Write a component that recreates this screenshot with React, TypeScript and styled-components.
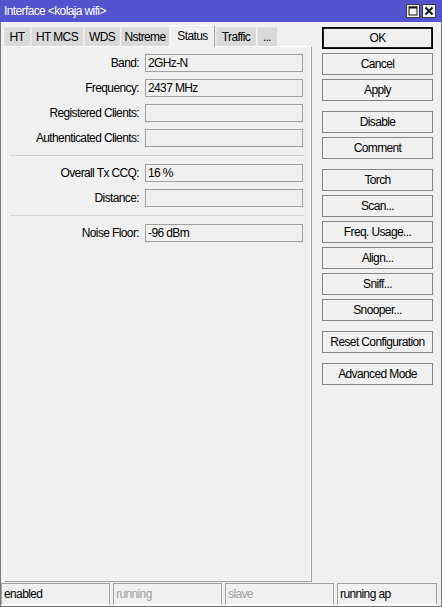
import React from "react";
import styled, { createGlobalStyle } from "styled-components";

const GlobalStyle = createGlobalStyle`
  html, body { margin: 0; padding: 0; background: #f0f0f0; }
  * { box-sizing: border-box; }
  body {
    font-family: "Liberation Sans", Arial, sans-serif;
    font-size: 12px;
    letter-spacing: -0.62px;
    color: #000;
  }
`;

const Window = styled.div`
  width: 442px;
  height: 607px;
  display: flex;
  flex-direction: column;
  background: #f0f0f0;
  overflow: hidden;
`;

const TitleBar = styled.div`
  height: 22px;
  flex: none;
  background: #5353cd;
  display: flex;
  align-items: center;
  justify-content: space-between;
  padding: 0 6px 0 4px;
  color: #fff;
`;

const TitleText = styled.span`
  line-height: 22px;
  white-space: nowrap;
`;

const TitleButtons = styled.div`
  display: flex;
  gap: 2px;
`;

const TitleButton = styled.div`
  width: 14px;
  height: 14px;
  border: 1px solid #3c3c3c;
  background: #f0f0f0;
  display: flex;
  align-items: center;
  justify-content: center;
`;

const Body = styled.div`
  flex: 1;
  display: flex;
  flex-direction: column;
  border: 1px solid #7a7a7a;
  border-top: none;
`;

const Main = styled.div`
  flex: 1;
  display: flex;
  padding: 2px 0 1px 3px;
`;

const LeftColumn = styled.div`
  width: 308px;
  display: flex;
  flex-direction: column;
`;

const Tabs = styled.div`
  height: 22px;
  display: flex;
  align-items: flex-end;
  gap: 1px;
`;

const Tab = styled.div<{ $w: number; $active?: boolean }>`
  width: ${(p) => p.$w}px;
  height: ${(p) => (p.$active ? 22 : 19)}px;
  display: flex;
  align-items: center;
  justify-content: center;
  white-space: nowrap;
  background: ${(p) => (p.$active ? "#f0f0f0" : "#d9d9d9")};
  border-top: 1px solid ${(p) => (p.$active ? "#ffffff" : "#e4e4e4")};
  border-left: 1px solid ${(p) => (p.$active ? "#ffffff" : "#e4e4e4")};
  border-right: 1px solid ${(p) => (p.$active ? "#a0a0a0" : "#d9d9d9")};
  position: relative;
  z-index: ${(p) => (p.$active ? 1 : 0)};
  margin-bottom: ${(p) => (p.$active ? -1 : 0)}px;
  padding-bottom: ${(p) => (p.$active ? 2 : 0)}px;
`;

const Panel = styled.div`
  flex: 1;
  border-top: 1px solid #ffffff;
  border-left: 1px solid #ffffff;
  border-right: 1px solid #a0a0a0;
  border-bottom: 1px solid #a0a0a0;
  box-shadow: inset -1px 0 0 #ffffff;
  padding-top: 7px;
  display: flex;
  flex-direction: column;
  gap: 7px;
`;

const Row = styled.div`
  display: grid;
  grid-template-columns: 134px 158px;
  column-gap: 6px;
  align-items: center;
`;

const Label = styled.div`
  text-align: right;
  white-space: nowrap;
`;

const Field = styled.div`
  height: 18px;
  border: 1px solid #a0a0a0;
  background: #f0f0f0;
  padding: 0 2px;
  line-height: 16px;
  white-space: nowrap;
`;

const Separator = styled.div`
  height: 1px;
  margin: 1px 7px 1px 5px;
  background: #d2d2d2;
`;

const RightColumn = styled.div`
  width: 111px;
  margin-left: 10px;
  padding-top: 3px;
  display: flex;
  flex-direction: column;
  gap: 10px;
`;

const ButtonGroup = styled.div`
  display: flex;
  flex-direction: column;
  gap: 4px;
`;

const Button = styled.div<{ $default?: boolean }>`
  height: 22px;
  display: flex;
  align-items: center;
  justify-content: center;
  white-space: nowrap;
  background: #f0f0f0;
  border: 1px solid ${(p) => (p.$default ? "#000000" : "#858585")};
  box-shadow: ${(p) => (p.$default ? "inset 0 0 0 1px #1e1e1e" : "none")};
`;

const StatusBar = styled.div`
  height: 23px;
  display: grid;
  grid-template-columns: 109px 109px 109px 1fr;
  column-gap: 3px;
  padding: 0 4px 1px 0;
`;

const StatusCell = styled.div<{ $dim?: boolean }>`
  height: 22px;
  border-top: 1px solid #a0a0a0;
  border-left: 1px solid #a0a0a0;
  border-right: 1px solid #a0a0a0;
  border-bottom: 1px solid #ffffff;
  padding-left: 2px;
  line-height: 20px;
  white-space: nowrap;
  color: ${(p) => (p.$dim ? "#a0a0a0" : "#000000")};
`;

const MaximizeIcon = () => (
  <svg width="10" height="10" viewBox="0 0 10 10">
    <rect x="1" y="1" width="8" height="8" fill="none" stroke="#1a1a1a" strokeWidth="1" />
    <rect x="1" y="0.5" width="8" height="2" fill="#1a1a1a" />
  </svg>
);

const CloseIcon = () => (
  <svg width="10" height="10" viewBox="0 0 10 10">
    <path d="M1.5 1.5 L8.5 8.5 M8.5 1.5 L1.5 8.5" stroke="#1a1a1a" strokeWidth="2" />
  </svg>
);

const tabs: { label: string; w: number; active?: boolean }[] = [
  { label: "HT", w: 26 },
  { label: "HT MCS", w: 52 },
  { label: "WDS", w: 36 },
  { label: "Nstreme", w: 48 },
  { label: "Status", w: 45, active: true },
  { label: "Traffic", w: 40 },
  { label: "...", w: 20 },
];

type Item = { kind: "row"; label: string; value: string } | { kind: "sep" };

const items: Item[] = [
  { kind: "row", label: "Band:", value: "2GHz-N" },
  { kind: "row", label: "Frequency:", value: "2437 MHz" },
  { kind: "row", label: "Registered Clients:", value: "" },
  { kind: "row", label: "Authenticated Clients:", value: "" },
  { kind: "sep" },
  { kind: "row", label: "Overall Tx CCQ:", value: "16 %" },
  { kind: "row", label: "Distance:", value: "" },
  { kind: "sep" },
  { kind: "row", label: "Noise Floor:", value: "-96 dBm" },
];

const buttonGroups: string[][] = [
  ["OK", "Cancel", "Apply"],
  ["Disable", "Comment"],
  ["Torch", "Scan...", "Freq. Usage...", "Align...", "Sniff...", "Snooper..."],
  ["Reset Configuration"],
  ["Advanced Mode"],
];

export default function App() {
  return (
    <>
      <GlobalStyle />
      <Window>
        <TitleBar>
          <TitleText>Interface &lt;kolaja wifi&gt;</TitleText>
          <TitleButtons>
            <TitleButton>
              <MaximizeIcon />
            </TitleButton>
            <TitleButton>
              <CloseIcon />
            </TitleButton>
          </TitleButtons>
        </TitleBar>
        <Body>
          <Main>
            <LeftColumn>
              <Tabs>
                {tabs.map((t) => (
                  <Tab key={t.label} $w={t.w} $active={t.active}>
                    {t.label}
                  </Tab>
                ))}
              </Tabs>
              <Panel>
                {items.map((it, i) =>
                  it.kind === "sep" ? (
                    <Separator key={i} />
                  ) : (
                    <Row key={i}>
                      <Label>{it.label}</Label>
                      <Field>{it.value}</Field>
                    </Row>
                  )
                )}
              </Panel>
            </LeftColumn>
            <RightColumn>
              {buttonGroups.map((g, gi) => (
                <ButtonGroup key={gi}>
                  {g.map((b) => (
                    <Button key={b} $default={b === "OK"}>
                      {b}
                    </Button>
                  ))}
                </ButtonGroup>
              ))}
            </RightColumn>
          </Main>
          <StatusBar>
            <StatusCell>enabled</StatusCell>
            <StatusCell $dim>running</StatusCell>
            <StatusCell $dim>slave</StatusCell>
            <StatusCell>running ap</StatusCell>
          </StatusBar>
        </Body>
      </Window>
    </>
  );
}
